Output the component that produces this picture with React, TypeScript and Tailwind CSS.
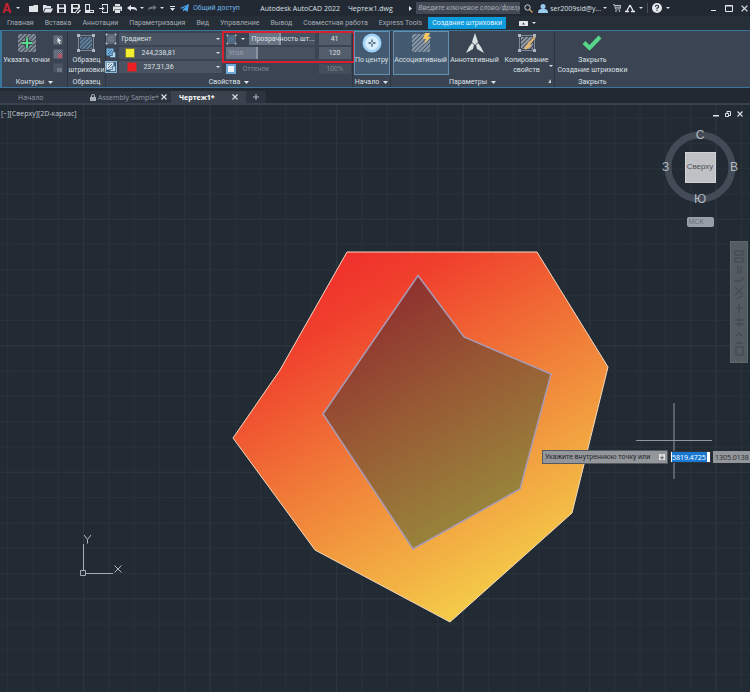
import { useState } from "react";
import type { ReactNode } from "react";

const menuTabs = [
  "Главная",
  "Вставка",
  "Аннотации",
  "Параметризация",
  "Вид",
  "Управление",
  "Вывод",
  "Совместная работа",
  "Express Tools",
];

const Caret = () => (
  <svg width="5" height="3" viewBox="0 0 5 3" className="shrink-0" fill="#dfe3e8">
    <path d="M0 0h5L2.5 3z" />
  </svg>
);

const Dot = () => (
  <svg width="4" height="2" viewBox="0 0 4 2" className="shrink-0" fill="#dde2e8">
    <path d="M0 0h4L2 2z" />
  </svg>
);

const Close = ({ size = 6 }: { size?: number }) => (
  <svg width={size} height={size} viewBox="0 0 6 6" stroke="#dde1e6" strokeWidth="1.1">
    <path d="M.5.5l5 5M5.5.5l-5 5" />
  </svg>
);

type HatchProps = { size?: number; frame?: boolean; id: string; stroke?: string; children?: ReactNode };

// square filled with diagonal hatch lines, optional corner grips
const Hatch = ({ size = 20, frame, id, stroke = "#b9c0c9", children }: HatchProps) => (
  <svg width={size} height={size} viewBox="0 0 20 20" fill="none" className="shrink-0">
    <defs>
      <pattern id={id} width="3" height="3" patternUnits="userSpaceOnUse" patternTransform="rotate(45)">
        <path d="M1 0v3" stroke={stroke} strokeWidth="1.2" />
      </pattern>
    </defs>
    {frame ? (
      <>
        <rect x="2.5" y="2.5" width="15" height="15" stroke="#8f99a6" strokeWidth=".8" />
        <rect x="4" y="4" width="12" height="12" fill={`url(#${id})`} />
        <path d="M1 1h3v3H1zM16 1h3v3h-3zM1 16h3v3H1zM16 16h3v3h-3z" fill="#aeb6c0" />
      </>
    ) : (
      <rect x="1" y="1" width="18" height="18" fill={`url(#${id})`} />
    )}
    {children}
  </svg>
);

const quickIcons = [
  { name: "Создать", d: "M1 3h4l1-1h4v7H1z" },
  { name: "Открыть", d: "M1 2h3l1 1h4v2H3L1 9zM3.6 5.6H11L9 9.5H1.8z" },
  { name: "Сохранить", d: "M1 1h8l1 1v8H1zM3 1.6v3h5v-3zM3 6v3.4h5V6z" },
  { name: "Сохранить как", d: "M1 1h8l1 1v3L6 9v1H1zM3 2v2.5h5V2zM3 6v3h2l2.5-3zM7 9.5l3-3 1 1-3 3H7z" },
  { name: "Открыть с мобильного", d: "M1 1h5v6h4v3H1zM2.2 2v5H5V2zM6 8h3v1H6z" },
  { name: "Сохранить на мобильном", d: "M4 1h6v9H4V8h1v1h4V2H5v1H4zM1 5h3V3.4l2.6 2.1L4 7.6V6H1z" },
  { name: "Печать", d: "M3 1h5v2H3zM1 3.5h9v4.5H8.5V6h-6v2H1zM3 6.6h5V10H3z" },
];

const QuickAccess = () => (
  <div className="flex items-center">
    <button aria-label="Меню приложения" className="flex items-center gap-1 pl-0.5">
      <svg width="10" height="10" viewBox="0 0 8 9" fill="#c5222f">
        <path fillRule="evenodd" d="M3 0h2l3 9H6L5.5 7.2h-3L2 9H0zM4 2.5L3 5.8h2z" />
      </svg>
      <Dot />
    </button>
    <div className="flex items-center ml-1.5">
      {quickIcons.map((icon) => (
        <button key={icon.name} aria-label={icon.name} className="w-3.5 flex justify-center">
          <svg width="11" height="11" viewBox="0 0 11 11" fill="#dfe3e8" fillRule="evenodd">
            <path d={icon.d} />
          </svg>
        </button>
      ))}
      <button aria-label="Отменить" className="w-4 flex justify-center">
        <svg width="10" height="7" viewBox="0 0 10 7" fill="#e4e8ec">
          <path d="M0 3L4 0v2h3q3 .5 3 4Q8.5 4 4 4v2z" />
        </svg>
      </button>
      <Dot />
      <button aria-label="Повторить" className="w-4 flex justify-center">
        <svg width="9" height="6" viewBox="0 0 10 7" fill="#6d7682">
          <path d="M10 3L6 0v2H3Q0 2.5 0 6q1.5-2 6-2v2z" />
        </svg>
      </button>
      <Dot />
      <button aria-label="Настройка панели" className="w-4 flex justify-center">
        <svg width="5" height="5" viewBox="0 0 5 5" fill="#dfe3e8">
          <path d="M0 0h5v1H0zM0 2h5L2.5 5z" />
        </svg>
      </button>
    </div>
    <button className="flex items-center gap-1 text-[#6fb3e6]">
      <svg width="9" height="8" viewBox="0 0 9 8" fill="#4aa5e8">
        <path d="M0 4l9-4-1.5 8L4.7 6 3.2 7.6 3 5.2 7 1.8 2 4.8z" />
      </svg>
      Общий доступ
    </button>
  </div>
);

const TitleBar = () => (
  <header className="flex items-center justify-between h-4 bg-[#222933] whitespace-nowrap">
    <QuickAccess />
    <h1 className="flex gap-2 pl-1 font-['Open_Sans']">
      <span>Autodesk AutoCAD 2022</span>
      <span>Чертеж1.dwg</span>
    </h1>
    <div className="flex items-center pr-0.5">
      <svg width="3" height="5" viewBox="0 0 3 5" fill="#e4e8ec">
        <path d="M0 0l3 2.5L0 5z" />
      </svg>
      <input
        aria-label="Поиск"
        placeholder="Введите ключевое слово/фразу"
        className="w-26 h-3 ml-1 pl-0.5 bg-[#434a55] italic placeholder:text-[#a3a9b2]"
      />
      <button aria-label="Найти" className="w-4 flex justify-center">
        <svg width="9" height="9" viewBox="0 0 9 9" fill="none" stroke="#ccd1d8">
          <circle cx="3.5" cy="3.5" r="2.7" />
          <path d="M5.5 5.5l3 3" stroke="#d9a36a" strokeWidth="1.3" />
        </svg>
      </button>
      <button className="flex items-center gap-0.5 ml-0.5">
        <svg width="10" height="9" viewBox="0 0 10 9" fill="#9ccbf0">
          <circle cx="5" cy="2.5" r="2.5" />
          <path d="M0 9q0-4 3.5-4h3Q10 5 10 9z" />
        </svg>
        <span className="font-['Open_Sans']">ser2009sid@y...</span>
        <Dot />
      </button>
      <button aria-label="Магазин" className="w-4 ml-0.5 flex justify-center">
        <svg width="8" height="8" viewBox="0 0 8 8" fill="none" stroke="#ccd1d8" strokeWidth=".9">
          <path d="M0 .7h1.5L2.5 5H7l.8-3.5H2M2.5 3.2h5" />
          <circle cx="3" cy="7" r=".5" />
          <circle cx="6.5" cy="7" r=".5" />
        </svg>
      </button>
      <button aria-label="Autodesk App Store" className="flex items-center gap-1">
        <svg width="10" height="9" viewBox="0 0 10 9" fill="none" stroke="#e4e8ec" strokeWidth="1.3">
          <path d="M5 1L1.5 7.5M5 1l3.5 6.5M0 7.500h4M6 7.500h4" />
        </svg>
        <Dot />
      </button>
      <span className="w-px h-2.5 mx-1 bg-[#4a525e]" />
      <button aria-label="Справка" className="flex items-center gap-1">
        <svg width="10" height="10" viewBox="0 0 10 10">
          <circle cx="5" cy="5" r="5" fill="#e4e8ec" />
          <path d="M3.4 3.8Q3.4 2.3 5 2.3t1.6 1.5Q6.6 4.8 5 5.2v1M5 7v1" fill="none" stroke="#222933" strokeWidth="1.1" />
        </svg>
        <Dot />
      </button>
      <div className="flex items-center gap-2 ml-10">
        <button aria-label="Свернуть">
          <svg width="7" height="7" viewBox="0 0 7 7" fill="#e4e8ec">
            <path d="M1 5h5v1H1z" />
          </svg>
        </button>
        <button aria-label="Развернуть">
          <svg width="8" height="7" viewBox="0 0 8 7" fill="none" stroke="#e4e8ec">
            <path d="M.5.5h7v6h-7zM.5 1h7" />
          </svg>
        </button>
        <button aria-label="Закрыть окно">
          <Close size={7} />
        </button>
      </div>
    </div>
  </header>
);

const MenuTabs = () => (
  <nav className="flex items-center h-3.5 gap-px pl-0.5 bg-[#262e38] text-[#a4abb5] whitespace-nowrap">
    {menuTabs.map((tab) => (
      <button key={tab} className="px-[5px]">
        {tab}
      </button>
    ))}
    <button className="h-3 px-1 bg-[#0d9bdc] text-[#e2f3fc]">Создание штриховки</button>
    <button aria-label="Вид ленты" className="flex items-center gap-1 ml-3">
      <svg width="9" height="5" viewBox="0 0 9 5">
        <rect width="9" height="5" rx=".5" fill="#e4e8ec" />
        <path d="M3 3.500h3L4.5 1.5z" fill="#444" />
      </svg>
      <Dot />
    </button>
  </nav>
);

type PanelProps = { title: string; arrow?: boolean; className?: string; children: ReactNode };

const Panel = ({ title, arrow, className = "", children }: PanelProps) => (
  <section className={`flex flex-col shrink-0 border-r border-[#2d3541] ${className}`}>
    <div className="flex h-11.5 justify-center">{children}</div>
    <h2 className="flex flex-1 items-center justify-center gap-1">
      {title}
      {arrow && <Caret />}
    </h2>
  </section>
);

const PropertyRow = ({ icon, swatch, label, options }: { icon: ReactNode; swatch?: ReactNode; label: string; options: string[] }) => (
  <div className="flex items-center h-3 gap-0.5">
    {icon}
    <div className="relative flex flex-1 items-center h-3 bg-[#4a5361]">
      {swatch}
      <select aria-label={label} className="flex-1 h-3 pl-0.5 appearance-none bg-transparent">
        {options.map((o) => (
          <option key={o}>{o}</option>
        ))}
      </select>
      <span className="absolute right-0.5 pointer-events-none">
        <Dot />
      </span>
    </div>
  </div>
);

type SliderProps = { label: string; value: string; fill: string; onChange: (v: string) => void; max: number; dim?: boolean };

const SliderField = ({ label, value, fill, onChange, max, dim }: SliderProps) => (
  <>
    <div className="relative flex flex-1 items-center h-3 bg-[#485160] overflow-hidden">
      <span className={`absolute inset-y-0 left-0 bg-[#687384] border-r-2 border-[#8993a1] ${fill}`} />
      <span className={`relative pl-0.5 whitespace-nowrap ${dim ? "text-[#98a1ad]" : ""}`}>{label}</span>
      <input
        type="range"
        aria-label={label}
        max={max}
        value={value}
        onChange={(e) => onChange(e.target.value)}
        className="absolute inset-0 w-full opacity-0"
      />
    </div>
    <input
      aria-label={`${label} значение`}
      value={value}
      onChange={(e) => onChange(e.target.value)}
      className="w-8 h-3 bg-[#535d6c] text-center"
    />
  </>
);

const LayerIcon = ({ active }: { active?: boolean }) => (
  <svg width="12" height="12" viewBox="0 0 12 12" className="shrink-0">
    {active && <rect x=".5" y=".5" width="11" height="11" fill="#41607a" stroke="#8fb9d8" />}
    <rect x="1.5" y="1.5" width="7" height="7" fill={active ? "#d5e7f5" : "#73b4e3"} />
    <path d="M3 7l4-4M3 4l1.5-1.5M5 7.5l2-2" stroke="#34506a" strokeWidth=".8" />
    <path d="M7.5 5h3v5.500H5V8.500h2.500z" fill="#b4d8f3" stroke="#34506a" strokeWidth=".6" />
  </svg>
);

const PropertiesPanel = () => {
  const [transparency, setTransparency] = useState("41");
  const [angle, setAngle] = useState("120");

  return (
    <Panel title="Свойства" arrow className="w-[247px]">
      <div className="flex flex-col shrink-0 w-[119px] pl-0.5 pt-0.5 gap-0.5">
        <PropertyRow icon={<Hatch id="h-type" size={12} frame />} label="Тип штриховки" options={["Градиент", "Образец", "Тело"]} />
        <PropertyRow
          icon={<LayerIcon />}
          label="Цвет 1"
          options={["244,238,81"]}
          swatch={<span className="size-2.5 ml-1.5 mr-1 bg-[#f4ee30] border border-[#7d7a3c]" />}
        />
        <PropertyRow
          icon={<LayerIcon active />}
          label="Цвет 2"
          options={["237,31,36"]}
          swatch={<span className="size-2.5 ml-2 mr-1 bg-[#ed1f24] border border-[#8a4040]" />}
        />
      </div>
      <div className="flex flex-col flex-1">
        <div className="flex flex-col gap-0.5 border-2 border-[#d5202f] px-0.5 pb-0.5">
          <div className="flex items-center gap-1">
            <Hatch id="h-transp" size={11} stroke="#6fb2e4" frame />
            <Dot />
            <SliderField label="Прозрачность шт..." value={transparency} onChange={setTransparency} max={90} fill="w-8" />
          </div>
          <div className="flex items-center gap-1">
            <SliderField label="Угол" value={angle} onChange={setAngle} max={359} fill="w-8" dim />
          </div>
        </div>
        <div className="flex items-center h-2.5 mt-px gap-1.5 px-1 text-[#7f8894]">
          <svg width="10" height="10" viewBox="0 0 10 10">
            <rect width="10" height="10" fill="#6ea9d8" />
            <rect x="2" y="2" width="6" height="6" fill="#eef5fa" />
          </svg>
          <label htmlFor="tint" className="flex-1">
            Оттенок
          </label>
          <input id="tint" disabled defaultValue="100%" className="w-8 h-2.5 bg-[#444d5a] text-center" />
        </div>
      </div>
    </Panel>
  );
};

const Ribbon = () => (
  <div className="flex h-[58px] bg-[#3b4453] border-y border-[#3b769c] border-l-2 whitespace-nowrap leading-[10px]">
    <Panel title="Контуры" arrow className="w-[66px]">
      <button className="flex flex-col items-center w-12 pt-0.5 gap-0.5">
        <Hatch id="h-pick">
          <path d="M10 4.500v11M4.500 10h11" stroke="#3b4453" strokeWidth="4" />
          <path d="M10 4.500v11M4.500 10h11" stroke="#5bd98a" strokeWidth="2" />
        </Hatch>
        Указать точки
      </button>
      <div className="flex flex-col pt-1 gap-1 pl-0.5 pr-1">
        <button aria-label="Выбрать">
          <Hatch id="h-sel" size={10} stroke="#a3acb8">
            <path d="M9 5l8 7-4 .5 2 5-2 1-2-5-2 2z" fill="#e4e8ec" />
          </Hatch>
        </button>
        <button aria-label="Удалить">
          <Hatch id="h-rem" size={10} stroke="#a3acb8">
            <path d="M10 10l8 8M18 10l-8 8" stroke="#d0506a" strokeWidth="2.5" />
          </Hatch>
        </button>
        <button aria-label="Воссоздать">
          <Hatch id="h-rec" size={10} stroke="#626c79">
            <path d="M8 10h10v8H8z" fill="#6b7583" />
          </Hatch>
        </button>
      </div>
    </Panel>
    <Panel title="Образец" className="w-[38px]">
      <button className="flex flex-col items-center pt-0.5 gap-0.5">
        <Hatch id="h-pattern" frame stroke="#79a9d0" />
        <span>
          Образец
          <br />
          штриховки
        </span>
      </button>
    </Panel>
    <PropertiesPanel />
    <Panel title="Начало" arrow className="w-[38px]">
      <button className="flex flex-col items-center w-9 h-11 pt-px gap-0.5 bg-[#445a70] border border-[#6390b2]">
        <svg width="20" height="20" viewBox="0 0 20 20" className="shrink-0">
          <circle cx="10" cy="10" r="9.5" fill="#9ed1f5" />
          <circle cx="10" cy="10" r="7" fill="#d6edfc" />
          <path d="M10 6.500v7M6.500 10h7" stroke="#38536d" strokeWidth="1.3" />
          <circle cx="10" cy="10" r="1" fill="#d6edfc" />
        </svg>
        По центру
      </button>
    </Panel>
    <Panel title="Параметры" arrow className="relative w-[164px]">
      <button className="flex flex-col items-center w-14 h-11 pt-px gap-0.5 bg-[#445a70] border border-[#6390b2]">
        <Hatch id="h-assoc">
          <path d="M14 0h5l-2 4h3l-7 7 2-5h-3z" fill="#f6c662" />
        </Hatch>
        Ассоциативный
      </button>
      <button className="flex flex-col items-center w-13 pt-0.5 gap-0.5">
        <svg width="20" height="20" viewBox="0 0 20 20" fill="#dce1e6" className="shrink-0">
          <path d="M10 0l3 9-3 3-3-3zM9 12l-1 4-7 4 3-6 3-4zM11 12l1 4 7 4-3-6-3-4z" />
        </svg>
        Аннотативный
      </button>
      <button className="relative flex flex-col items-center w-13 pt-0.5 gap-0.5">
        <Hatch id="h-copy" frame stroke="#d3d8de">
          <path d="M18 4l-6 7M12 10l-4 6 5-3z" stroke="#e0b572" strokeWidth="2" fill="#f3e4c4" />
        </Hatch>
        <span>
          Копирование
          <br />
          свойств
        </span>
        <span className="absolute right-0 bottom-2.5">
          <Dot />
        </span>
      </button>
      <svg width="4" height="4" viewBox="0 0 4 4" className="absolute right-0.5 bottom-1" fill="#cdd3da">
        <path d="M0 0l2 2 1-2v4H0l1.500-1.500z" />
      </svg>
    </Panel>
    <Panel title="Закрыть" className="w-[76px] border-r-transparent">
      <button className="flex flex-col items-center pt-0.5 gap-0.5">
        <svg width="20" height="20" viewBox="0 0 20 20" fill="none" className="shrink-0">
          <path d="M2 9.500l5.500 5.500L18 4" stroke="#55d68a" strokeWidth="4" />
        </svg>
        <span>
          Закрыть
          <br />
          Создание штриховки
        </span>
      </button>
    </Panel>
  </div>
);

const DocumentTabs = () => (
  <nav className="flex items-end h-[17px] bg-[#222933] border-b-2 border-[#3a424e] text-[#969da7] font-['Open_Sans']">
    <button className="w-20 h-3 pl-4.5 text-left bg-[#2b333e]">Начало</button>
    <div className="flex items-center w-[91px] h-3 pl-2.5 gap-0.5 bg-[#2b333e]">
      <svg width="6" height="7" viewBox="0 0 6 7" fill="#aab0b9">
        <path fillRule="evenodd" d="M0 3h1V2q0-2 2-2t2 2v1h1v4H0zM2 3h2V2Q4 1 3 1T2 2z" />
      </svg>
      <button>Assembly Sample*</button>
      <button aria-label="Закрыть Assembly Sample">
        <Close />
      </button>
    </div>
    <div className="flex items-center justify-between w-[75px] h-3 px-2 bg-[#3a424e]">
      <button className="font-bold text-white">Чертеж1*</button>
      <button aria-label="Закрыть Чертеж1">
        <Close />
      </button>
    </div>
    <button aria-label="Новый чертеж" className="flex items-center justify-center w-5 h-3 bg-[#2b333e]">
      <svg width="6" height="6" viewBox="0 0 6 6" stroke="#b4bac2">
        <path d="M3 0v6M0 3h6" />
      </svg>
    </button>
  </nav>
);

const Drawing = () => (
  <svg className="absolute inset-0 w-full h-full" fill="none">
    <defs>
      <pattern id="grid" x="83" y="468" width="25.3" height="25.3" patternUnits="userSpaceOnUse">
        <path d="M.5 0v25.3M0 .5h25.3" stroke="#29323b" />
      </pattern>
      <pattern id="grid-major" x="83" y="493.3" width="126.5" height="126.5" patternUnits="userSpaceOnUse">
        <path d="M.5 0v126.5M0 .5h126.5" stroke="#2c353e" />
      </pattern>
      <linearGradient id="outer" gradientUnits="userSpaceOnUse" x1="347" y1="147" x2="533" y2="469">
        <stop offset="0" stopColor="#f0302c" />
        <stop offset=".15" stopColor="#f0402d" />
        <stop offset=".5" stopColor="#f07c38" />
        <stop offset="1" stopColor="#f4cc49" />
      </linearGradient>
      <linearGradient id="inner" gradientUnits="userSpaceOnUse" x1="418" y1="170" x2="536" y2="374">
        <stop offset="0" stopColor="#8f302f" />
        <stop offset=".5" stopColor="#985b34" />
        <stop offset="1" stopColor="#98833b" />
      </linearGradient>
    </defs>
    <rect width="100%" height="100%" fill="url(#grid)" />
    <rect width="100%" height="100%" fill="url(#grid-major)" />
    <path d="M347 147H537L608 262 572 408 450 517 315 445 233 333 280 265z" fill="url(#outer)" stroke="#f3d9c0" />
    <path d="M418 170.500L464 232 551 269 520 384 413 444 323 309z" fill="url(#inner)" stroke="#a99bb5" strokeWidth="1.5" />
    {/* UCS icon */}
    <path d="M83.500 439v26M86 468.500h27M80.500 465.500h5v5h-5z" stroke="#a7adb4" />
    <path d="M84 430l3.500 4.500 3.500-4.500M87.500 434.500v4M114.500 460.500l7 7M121.500 460.500l-7 7" stroke="#b3b8be" />
    {/* crosshair */}
    <path d="M674 298v76M636 335.500h76" stroke="#8f969e" />
  </svg>
);

const ViewCube = () => (
  <div className="absolute right-3 top-6 flex flex-col items-center text-[#b3bac2] font-['Liberation_Sans']">
    <div className="relative grid place-items-center size-[76px] text-[12px] leading-3">
      <svg width="76" height="76" viewBox="0 0 76 76" fill="none" className="absolute inset-0">
        <circle cx="38" cy="38" r="32" stroke="#434c56" strokeWidth="7" />
      </svg>
      <span className="absolute top-0">С</span>
      <span className="absolute bottom-0">Ю</span>
      <span className="absolute left-0">З</span>
      <span className="absolute right-0">В</span>
      <button className="relative size-[31px] bg-[#bfc1c4] border border-[#d0d2d4] text-[#4b5058] text-[8px]">Сверху</button>
    </div>
    <button className="w-[27px] h-2.5 mt-3 pl-0.5 rounded-xs bg-[#989fa9] text-left text-[#69707a] text-[7px] leading-[10px]">МСК</button>
  </div>
);

const NavigationBar = () => (
  <aside className="absolute right-0.5 top-[136px] w-[18px] h-[122px] bg-[#535c61] border border-[#5e676b]">
    <svg width="16" height="120" viewBox="0 0 16 120" fill="none" stroke="#434c51" strokeWidth="1.3">
      <path d="M4 9h8v4H4zM4 16h8v4H4zM7 24v8M10 24v8M3 39h7l3-4M4 45l8 8M12 45l-8 8M5 57l7-3M8 62v9M5 66h7M4 78h9M4 82h9M8 75v10M5 94l3-3 3 3M5 101h7M5 105h7v8H5z" />
    </svg>
  </aside>
);

const DynamicInput = () => (
  <form className="absolute left-[542px] top-[345px] flex items-center gap-0.5 text-[#23272c] whitespace-nowrap" onSubmit={(e) => e.preventDefault()}>
    <label htmlFor="coord-x" className="flex items-center justify-between w-[126px] h-3.5 px-0.5 bg-[#93969b] border border-[#555a61]">
      Укажите внутреннюю точку или
      <svg width="6" height="6" viewBox="0 0 6 6">
        <rect width="6" height="6" fill="#e2e4e6" />
        <path d="M3 0v3M1 3h4L3 5.500z" stroke="#777" strokeWidth=".5" fill="#777" />
      </svg>
    </label>
    <div className="flex items-center w-[41px] h-3 bg-white border border-[#30353b] pl-px font-['Open_Sans']">
      <input id="coord-x" defaultValue="5819.4725" className="w-[35px] h-2.5 bg-[#1979d2] text-white" />
    </div>
    <input aria-label="Y" defaultValue="1305.0138" className="w-[38px] h-3 pl-0.5 bg-[#93969b] font-['Open_Sans']" />
  </form>
);

const App = () => (
  <div className="flex flex-col min-h-screen bg-[#222a33] text-[#dce0e5] text-[7px] leading-[9px] font-['Roboto','Open_Sans',sans-serif]">
    <TitleBar />
    <MenuTabs />
    <Ribbon />
    <DocumentTabs />
    <main className="relative flex-1 overflow-hidden">
      <Drawing />
      <div className="relative flex justify-between px-px pt-1 text-[#c6cbd1] font-['Open_Sans']">
        <span>[−][Сверху][2D-каркас]</span>
        <div className="flex gap-1.5 pr-1.5">
          <button aria-label="Свернуть чертеж">
            <svg width="6" height="6" viewBox="0 0 6 6" fill="#dfe3e8">
              <path d="M0 4h6v1.500H0z" />
            </svg>
          </button>
          <button aria-label="Восстановить чертеж">
            <svg width="6" height="6" viewBox="0 0 6 6" fill="none" stroke="#dfe3e8">
              <path d="M.5 2.500h3v3h-3zM2 2V.5h3.500v4H4" />
            </svg>
          </button>
          <button aria-label="Закрыть чертеж">
            <Close />
          </button>
        </div>
      </div>
      <ViewCube />
      <NavigationBar />
      <DynamicInput />
    </main>
  </div>
);

export default App;
